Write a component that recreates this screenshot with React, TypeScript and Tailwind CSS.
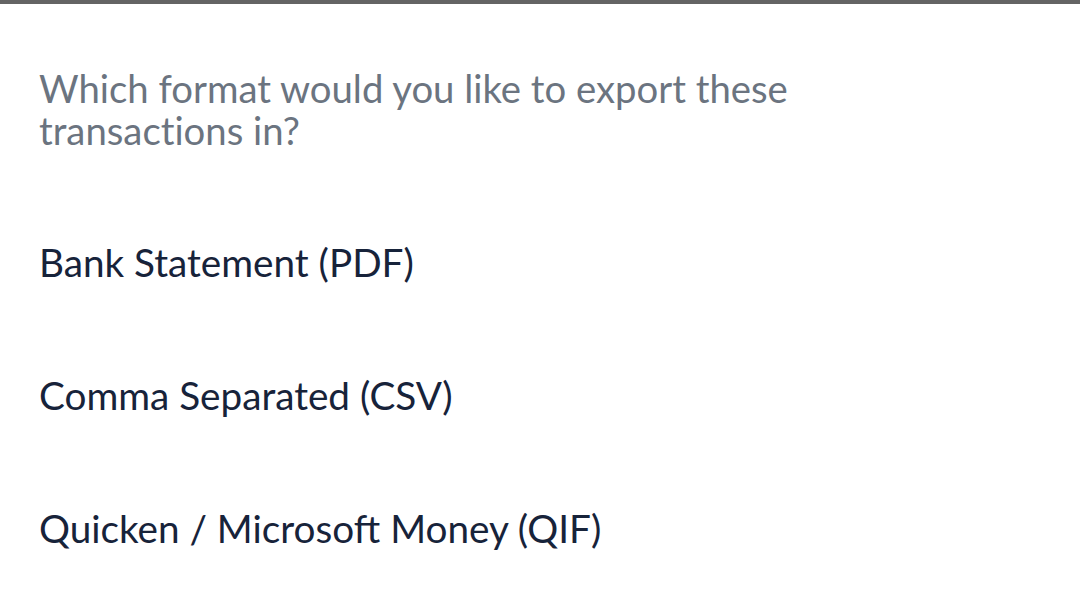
import React from "react";

export default function App() {
  const items = [
    "Bank Statement (PDF)",
    "Comma Separated (CSV)",
    "Quicken / Microsoft Money (QIF)",
  ];
  return (
    <div
      className="w-[1080px] h-[613px] bg-white overflow-hidden flex flex-col"
      style={{ fontFamily: "Lato, 'Open Sans', sans-serif" }}
    >
      <div className="h-[4px] bg-[#646464] shrink-0" />
      <div className="pl-[39px] pt-[63px]">
        <p className="text-[38.3px] leading-[42px] text-[#6b7480] w-[820px] [font-variant-ligatures:none]">
          Which format would you like to export these transactions in?
        </p>
        <div className="mt-[44px] flex flex-col">
          {items.map((t) => (
            <div key={t} className="h-[133px] flex items-center">
              <span className="text-[38.7px] leading-[42px] text-[#17233a]">{t}</span>
            </div>
          ))}
        </div>
      </div>
    </div>
  );
}
